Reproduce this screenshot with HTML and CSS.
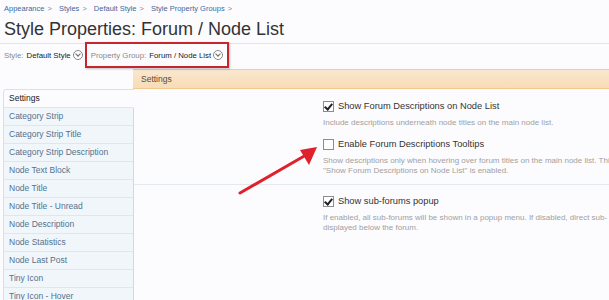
FILE: index.html
```html
<!DOCTYPE html>
<html lang="en">
<head>
  <meta charset="UTF-8" />
  <title>Style Properties: Forum / Node List</title>
  <link rel="stylesheet" href="styles.css">
</head>
<body>

  <div class="top-section">
    <div class="breadcrumb">
      <span class="crumb">Appearance</span><span class="sep">&gt;</span>
      <span class="crumb">Styles</span><span class="sep">&gt;</span>
      <span class="crumb">Default Style</span><span class="sep">&gt;</span>
      <span class="crumb">Style Property Groups</span><span class="sep">&gt;</span>
    </div>
    <h1>Style Properties: Forum / Node List</h1>
  </div>

  <div class="chooser-row">
    <span class="chooser"><span class="muted">Style:</span> Default Style<span class="drop"></span></span>
    <span class="chooser marked"><span class="muted">Property Group:</span> Forum / Node List<span class="drop"></span></span>
  </div>

  <div class="tab-strip">
    <div class="tab">Settings</div>
  </div>

  <div class="bottom-section">
    <ul class="side-list">
      <li class="active">Settings</li>
      <li>Category Strip</li>
      <li>Category Strip Title</li>
      <li>Category Strip Description</li>
      <li>Node Text Block</li>
      <li>Node Title</li>
      <li>Node Title - Unread</li>
      <li>Node Description</li>
      <li>Node Statistics</li>
      <li>Node Last Post</li>
      <li>Tiny Icon</li>
      <li>Tiny Icon - Hover</li>
    </ul>

    <div class="main-panel">
      <div class="unit-group">
        <div class="unit">
          <div class="option"><span class="box checked"></span>Show Forum Descriptions on Node List</div>
          <p class="hint">Include descriptions underneath node titles on the main node list.</p>
        </div>
        <div class="unit">
          <div class="option"><span class="box"></span>Enable Forum Descriptions Tooltips</div>
          <p class="hint">Show descriptions only when hovering over forum titles on the main node list. This<br>"Show Forum Descriptions on Node List" is enabled.</p>
        </div>
      </div>
      <div class="unit-group">
        <div class="unit">
          <div class="option"><span class="box checked"></span>Show sub-forums popup</div>
          <p class="hint">If enabled, all sub-forums will be shown in a popup menu. If disabled, direct sub-<br>displayed below the forum.</p>
        </div>
      </div>
    </div>
  </div>

  <!-- annotation arrow drawn over the page -->
  <svg class="arrow" width="609" height="300" viewBox="0 0 609 300">
    <line x1="240" y1="193" x2="306" y2="155" stroke="#e0202a" stroke-width="3" stroke-linecap="round" />
    <polygon points="317,147 300,150 309,165" fill="#e0202a" />
  </svg>

</body>
</html>
```

FILE: styles.css
```css
body {
  margin: 0;
  font-family: "Liberation Sans", Arial, sans-serif;
  background-color: #fcfcff;
  color: #333333;
  position: relative;
  height: 300px;
  overflow: hidden;
}

.top-section {
  padding: 0 4px;
  border-bottom: 1px solid #dbe9ec;
  height: 43px;
}

.breadcrumb {
  font-size: 7.5px;
  line-height: 18px;
  color: #3d6a99;
}

.breadcrumb .sep {
  color: #888888;
  margin: 0 5px 0 3px;
}

h1 {
  margin: 0;
  font-size: 18px;
  font-weight: normal;
  line-height: 22px;
  color: #333333;
}

.chooser-row {
  display: flex;
  align-items: center;
  height: 26px;
  margin-top: -2px;
  padding-left: 4px;
  font-size: 7.8px;
}

.chooser {
  display: flex;
  align-items: center;
  color: #222222;
}

.chooser .muted {
  color: #888888;
  margin-right: 3px;
}

.chooser.marked {
  margin-left: 2px;
  height: 22px;
  padding: 0 4px 0 4px;
  border: 2px solid #c8262e;
  box-shadow: 1px 1px 2px rgba(0, 0, 0, 0.25);
}

.drop {
  width: 8px;
  height: 8px;
  margin-left: 2px;
  border: 1px solid #8a8a8a;
  border-radius: 50%;
  position: relative;
  background-color: #ffffff;
}

.drop::after {
  content: "";
  position: absolute;
  left: 2px;
  top: 1px;
  width: 3px;
  height: 3px;
  border-right: 1px solid #666666;
  border-bottom: 1px solid #666666;
  transform: rotate(45deg);
}

.tab-strip {
  margin-left: 133px;
  height: 18px;
  margin-top: 1px;
  border-top: 1px solid #d6d0c8;
  background: linear-gradient(#fae7cf, #f7dcb6);
  border-bottom: 1px solid #f3c98f;
}

.tab {
  padding-left: 8px;
  font-size: 8.5px;
  line-height: 18px;
  color: #5b4a33;
}

.bottom-section {
  display: flex;
}

.side-list {
  flex: none;
  list-style: none;
  margin: 0 0 0 3px;
  padding: 0;
  width: 130px;
  border-top: 1px solid #d4e2ee;
  border-left: 1px solid #d4e2ee;
  border-top-left-radius: 4px;
}

.side-list li {
  height: 17px;
  line-height: 17px;
  padding-left: 5px;
  font-size: 8.5px;
  color: #55718c;
  background-color: #f1f6fb;
  border-bottom: 1px solid #dce7f1;
  border-right: 1px solid #c9dae8;
  white-space: nowrap;
}

.side-list li.active {
  background-color: #fcfcff;
  color: #222222;
  border-right-color: #fcfcff;
  border-top-left-radius: 4px;
}

.main-panel {
  flex: 1;
  min-width: 0;
  overflow: hidden;
}

.unit-group {
  padding: 10px 0 8px 189px;
  border-bottom: 1px solid #e4e9ee;
}

.unit-group + .unit-group {
  padding-top: 9px;
  border-bottom: none;
}

.unit + .unit {
  margin-top: 9px;
}

.option {
  display: flex;
  align-items: center;
  font-size: 9.3px;
  line-height: 14px;
  color: #333333;
  white-space: nowrap;
}

.box {
  flex: none;
  width: 9px;
  height: 9px;
  margin-right: 4px;
  border: 1px solid #8c8c8c;
  background-color: #ffffff;
  position: relative;
}

.box.checked::after {
  content: "";
  position: absolute;
  left: 2px;
  top: 0px;
  width: 3px;
  height: 6px;
  border-right: 2px solid #222222;
  border-bottom: 2px solid #222222;
  transform: rotate(40deg);
}

.hint {
  margin: 5px 0 0 0;
  font-size: 8px;
  line-height: 10px;
  color: #a0a0a0;
  white-space: nowrap;
}

.arrow {
  position: absolute;
  left: 0;
  top: 0;
  pointer-events: none;
}
```
